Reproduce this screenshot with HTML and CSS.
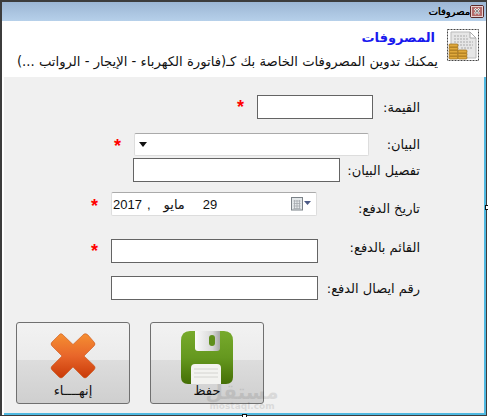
FILE: index.html
```html
<!DOCTYPE html>
<html lang="ar">
<head>
    <meta charset="UTF-8">
    <title>مصروفات</title>
    <link rel="stylesheet" href="styles.css">
</head>
<body>
    <div class="window">
        <div class="titlebar">
            <span class="title">مصروفات</span>
            <span class="close">
                <svg width="14" height="13" viewBox="0 0 14 13">
                    <rect x="0.5" y="0.5" width="13" height="12" rx="1.5" fill="#c98a8a" stroke="#5a2a2a"/>
                    <rect x="1.5" y="1.5" width="11" height="10" fill="#b46a6a" stroke="#e8d0d0"/>
                    <path d="M4.5 3.5 L9.5 9 M9.500 3.5 L4.5 9" stroke="#fff" stroke-width="2"/>
                    <path d="M4.5 3.5 L9.5 9 M9.500 3.5 L4.5 9" stroke="#333" stroke-width="0.7"/>
                </svg>
            </span>
        </div>

        <div class="header">
            <div class="header-text">
                <h1>المصروفات</h1>
                <p>يمكنك تدوين المصروفات الخاصة بك كـ(فاتورة الكهرباء - الإيجار - الرواتب ...)</p>
            </div>
            <svg class="header-icon" width="32" height="32" viewBox="0 0 32 32">
                <rect x="0.5" y="0.5" width="31" height="31" fill="#fff" stroke="#444" stroke-dasharray="2 1"/>
                <path d="M4 3 H23 L29 9 V29 H4 Z" fill="#e6e6e6" stroke="#bbb"/>
                <path d="M23 3 V9 H29 Z" fill="#fff" stroke="#aaa"/>
                <path d="M7 7 H20 M7 10 H21 M7 13 H26 M7 16 H26 M14 19 H26" stroke="#aaa" stroke-dasharray="2 1"/>
                <g fill="#e0a93c" stroke="#9a6a14" stroke-width="0.7">
                    <rect x="2" y="27" width="9" height="3" rx="1"/>
                    <rect x="2" y="24" width="9" height="3" rx="1"/>
                    <rect x="2" y="21" width="9" height="3" rx="1"/>
                    <rect x="2" y="18" width="9" height="3" rx="1"/>
                    <rect x="2" y="15" width="9" height="3" rx="1"/>
                    <rect x="11" y="27" width="9" height="3" rx="1"/>
                    <rect x="11" y="24" width="9" height="3" rx="1"/>
                    <rect x="11" y="21" width="9" height="3" rx="1"/>
                </g>
            </svg>
        </div>

        <div class="body">
            <div class="row row-amount">
                <span class="star">*</span>
                <span class="input w-116"></span>
                <label>القيمة:</label>
            </div>
            <div class="row row-desc">
                <span class="star">*</span>
                <span class="combo">
                    <svg class="combo-arrow" width="8" height="5" viewBox="0 0 8 5"><path d="M0 0 H8 L4 5 Z" fill="#111"/></svg>
                </span>
                <label>البيان:</label>
            </div>
            <div class="row row-detail">
                <span class="input w-207"></span>
                <label>تفصيل البيان:</label>
            </div>
            <div class="row row-date">
                <span class="star">*</span>
                <span class="date">
                    <span class="date-value">
                        <span class="year">2017</span><span class="comma">,</span><span class="month">مايو</span><span class="day">29</span>
                    </span>
                    <svg class="cal" width="20" height="14" viewBox="0 0 20 14">
                        <rect x="0.5" y="0.5" width="11" height="12.500" fill="#e4e8ea" stroke="#7b8288"/>
                        <path d="M2.5 4 H9.500 M2.5 6.500 H9.500 M2.5 9 H9.500 M2.5 11.500 H9.500 M3.500 3 V12 M6 3 V12 M8.500 3 V12" stroke="#a4aaae" stroke-width="0.8"/>
                        <path d="M13 4 H20 L16.500 8 Z" fill="#4c5a86"/>
                    </svg>
                </span>
                <label>تاريخ الدفع:</label>
            </div>
            <div class="row row-payer">
                <span class="star">*</span>
                <span class="input w-207"></span>
                <label>القائم بالدفع:</label>
            </div>
            <div class="row row-receipt">
                <span class="input w-207"></span>
                <label>رقم ايصال الدفع:</label>
            </div>

            <div class="buttons">
                <button class="btn">
                    <svg class="icon-x" width="48" height="48" viewBox="0 0 48 48">
                        <defs>
                            <linearGradient id="xfill" x1="0" y1="0" x2="0" y2="1">
                                <stop offset="0" stop-color="#f58f32"/>
                                <stop offset="0.5" stop-color="#e8662a"/>
                                <stop offset="1" stop-color="#c93a08"/>
                            </linearGradient>
                        </defs>
                        <path d="M13 2 L24 12.500 L35 2 Q37 1 39 3 L45 10 Q47 12 45 14 L35 24 L45.500 34 Q47 36 45 38 L38 45 Q36 47 34 45 L24 35 L14 45 Q12 47 10 45 L3 38 Q1 36 3 34 L13 24 L3 14 Q1 12 3 10 L10 3 Q11.500 1 13 2 Z" fill="url(#xfill)" stroke="#c9551a" stroke-width="0.6"/>
                    </svg>
                    <span class="btn-label">إنهــــاء</span>
                </button>
                <button class="btn">
                    <svg class="icon-disk" width="54" height="54" viewBox="0 0 54 54">
                        <defs>
                            <linearGradient id="disk" x1="0" y1="0" x2="0" y2="1">
                                <stop offset="0" stop-color="#77aa2c"/>
                                <stop offset="0.5" stop-color="#65981f"/>
                                <stop offset="1" stop-color="#456f05"/>
                            </linearGradient>
                            <linearGradient id="shutter" x1="0" y1="0" x2="1" y2="0">
                                <stop offset="0" stop-color="#fafafa"/>
                                <stop offset="0.7" stop-color="#d8d8d8"/>
                                <stop offset="1" stop-color="#a8a8a8"/>
                            </linearGradient>
                        </defs>
                        <path d="M10 0 H44 Q53 0 53 10 V46 Q53 53 46 53 H8 Q1 53 1 46 V10 Q1 0 10 0 Z" fill="url(#disk)"/>
                        <path d="M15 0 H40 V17 Q40 20 37 20 H18 Q15 20 15 17 Z" fill="url(#shutter)"/>
                        <rect x="29" y="4" width="6" height="11" rx="3" fill="#5f8f1c"/>
                        <path d="M11 53 V37 Q11 33 15 33 H37 Q41 33 41 37 V53 Z" fill="#f3f3f0"/>
                        <path d="M14 38 H38 M14 42 H38 M14 46 H38" stroke="#d4d4d0"/>
                    </svg>
                    <span class="btn-label">حفظ</span>
                </button>
            </div>
        </div>

        <div class="watermark">
            <span class="wm-ar">مستقل</span>
            <span class="wm-en">mostaql.com</span>
        </div>
    </div>
    <span class="handle handle-right"></span>
    <span class="handle handle-bottom"></span>
</body>
</html>
```

FILE: styles.css
```css
html, body {
    margin: 0;
    padding: 0;
}

body {
    width: 488px;
    height: 417px;
    overflow: hidden;
    position: relative;
    background-color: #fff;
    font-family: "DejaVu Sans", sans-serif;
    color: #111;
}

.window {
    position: relative;
    box-sizing: border-box;
    width: 487px;
    height: 416px;
    display: flex;
    flex-direction: column;
    border-style: solid;
    border-color: #3c3c3c;
    border-width: 2px 1px 1px 2px;
    background: linear-gradient(#9cb6d4, #b6d0ea 19px, #fff 19px);
    padding-left: 2px;
}

.titlebar {
    height: 19px;
    display: flex;
    justify-content: flex-end;
    align-items: center;
    gap: 0;
    padding-right: 2px;
}

.title {
    font-size: 10px;
    line-height: 14px;
    direction: rtl;
    color: #000;
    text-shadow: 0.4px 0 #000;
}

.close {
    display: flex;
}

.header {
    height: 56px;
    display: flex;
    justify-content: flex-end;
    background-color: #fff;
}

.header-text {
    direction: rtl;
    flex: 1;
    padding-right: 9px;
}

.header-text h1 {
    margin: 7px 0 0;
    padding-right: 3px;
    font-size: 13px;
    line-height: 20px;
    color: #1a1aee;
}

.header-text p {
    margin: 5px 0 0;
    font-size: 13.2px;
    line-height: 18px;
    white-space: nowrap;
}

.header-icon {
    margin: 8px 7px 0 0;
}

.body {
    flex: 1;
    background-color: #f0f0f0;
    display: flex;
    flex-direction: column;
    border-right: 2px solid #4fb8e0;
    border-bottom: 2px solid #4fb8e0;
}

.row {
    position: relative;
    display: flex;
    align-items: center;
    height: 24px;
    font-size: 13px;
}

.row label {
    margin-left: auto;
    padding-right: 64px;
    direction: rtl;
    white-space: nowrap;
}

.star {
    width: 20px;
    color: #f00;
    font-size: 18px;
    font-weight: bold;
    line-height: 16px;
    height: 16px;
    font-family: "Liberation Sans", sans-serif;
}

.input {
    box-sizing: border-box;
    height: 24px;
    background-color: #fff;
    border: 1px solid #646464;
}

.w-116 {
    width: 116px;
}

.w-207 {
    width: 207px;
}

.combo {
    box-sizing: border-box;
    width: 235px;
    height: 23px;
    display: flex;
    align-items: center;
    padding-left: 4px;
    background-color: #fff;
    border: 1px solid #ddd;
    border-top-color: #aaa;
    border-radius: 2px;
}

.date {
    box-sizing: border-box;
    width: 206px;
    height: 24px;
    display: flex;
    align-items: center;
    justify-content: space-between;
    padding: 0 5px 0 1px;
    background-color: #fff;
    border: 1px solid #ddd;
    border-top-color: #aaa;
    border-radius: 2px;
    font-family: "Liberation Sans", "DejaVu Sans", sans-serif;
    font-size: 13px;
}

.date-value {
    display: flex;
    align-items: center;
}

.comma {
    margin-left: 5px;
}

.month {
    margin-left: 13px;
}

.day {
    margin-left: 18px;
}

.row-amount {
    margin-top: 18px;
    padding-left: 233px;
}

.row-desc {
    height: 23px;
    margin-top: 14px;
    padding-left: 110px;
}

.row-desc .star {
    margin-top: 3px;
}

.row-detail {
    margin-top: 2px;
    padding-left: 129px;
}

.row-date {
    margin-top: 10px;
    padding-left: 87px;
}

.row-date .star {
    margin-top: 4px;
}

.row-date label {
    margin-top: 8px;
}

.row-payer {
    margin-top: 23px;
    padding-left: 87px;
}

.row-payer label {
    margin-bottom: 8px;
}

.row-receipt {
    margin-top: 13px;
    padding-left: 107px;
}

.buttons {
    display: flex;
    gap: 20px;
    margin-top: 22px;
    padding-left: 12px;
}

.btn {
    box-sizing: border-box;
    width: 114px;
    height: 82px;
    padding: 0;
    position: relative;
    display: flex;
    flex-direction: column;
    align-items: center;
    border: 1px solid #707070;
    border-radius: 3px;
    background: linear-gradient(#f2f2f2 0%, #ebebeb 46%, #dddddd 46%, #cfcfcf 100%);
    font-family: "DejaVu Sans", sans-serif;
    font-size: 13px;
    color: #111;
}

.icon-x {
    margin-top: 9px;
}

.icon-disk {
    margin-top: 8px;
}

.btn-label {
    position: absolute;
    bottom: 4px;
    left: 0;
    right: 0;
    text-align: center;
    direction: rtl;
    line-height: 16px;
}

.watermark {
    position: absolute;
    left: 208px;
    top: 380px;
    width: 64px;
    display: flex;
    flex-direction: column;
    align-items: center;
    color: #000;
    opacity: 0.09;
    line-height: 1;
}

.wm-ar {
    font-size: 20px;
    font-weight: bold;
    direction: rtl;
}

.wm-en {
    font-size: 9px;
    font-weight: bold;
}

.handle {
    position: absolute;
    width: 3px;
    height: 3px;
    background-color: #fff;
    border: 1px solid #111;
}

.handle-right {
    left: 485px;
    top: 205px;
}

.handle-bottom {
    left: 242px;
    top: 414px;
}
```
